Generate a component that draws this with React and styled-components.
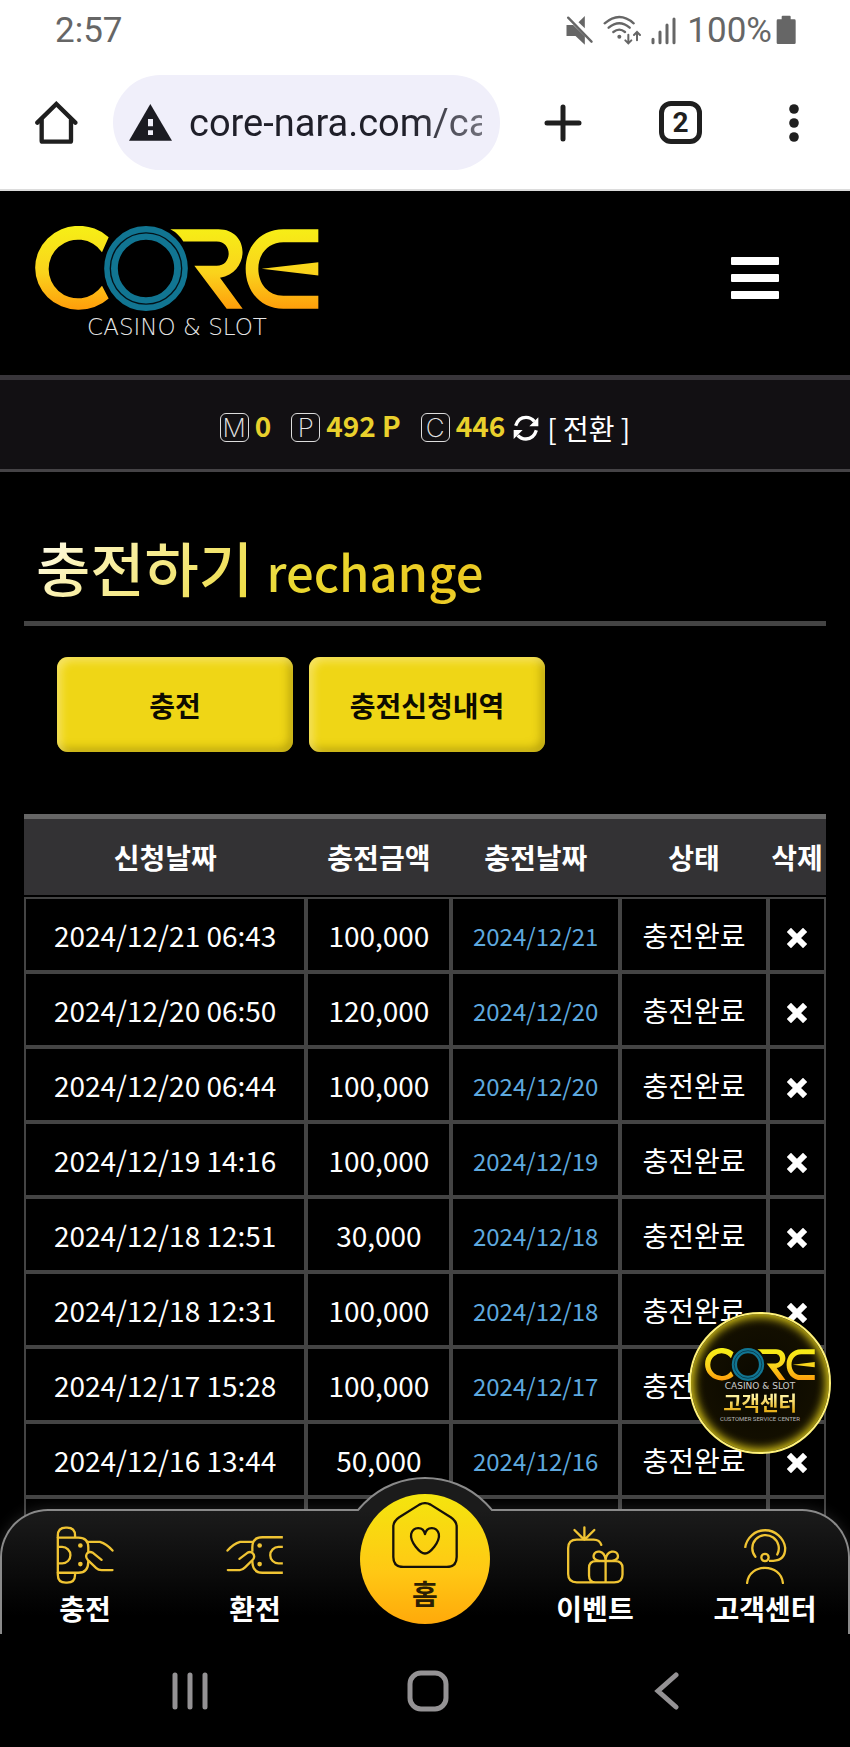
import React from "react";
import styled, { createGlobalStyle } from "styled-components";

const records = [
    { requested: "2024/12/21 06:43", amount: "100,000", charged: "2024/12/21" },
    { requested: "2024/12/20 06:50", amount: "120,000", charged: "2024/12/20" },
    { requested: "2024/12/20 06:44", amount: "100,000", charged: "2024/12/20" },
    { requested: "2024/12/19 14:16", amount: "100,000", charged: "2024/12/19" },
    { requested: "2024/12/18 12:51", amount: "30,000", charged: "2024/12/18" },
    { requested: "2024/12/18 12:31", amount: "100,000", charged: "2024/12/18" },
    { requested: "2024/12/17 15:28", amount: "100,000", charged: "2024/12/17" },
    { requested: "2024/12/16 13:44", amount: "50,000", charged: "2024/12/16" },
];

const MuteIcon = () => (
    <svg width="27" height="30" viewBox="76 42 80 90" aria-hidden="true">
        <path d="M77 72h20l35 34v25l-28-26H77z" fill="#666" />
        <path d="M113 64l19-19v37z" fill="#666" />
        <path d="M82 50l70 72" stroke="#666" strokeWidth="7" strokeLinecap="round" />
    </svg>
);

const WifiIcon = () => (
    <svg width="38" height="30" viewBox="186 42 114 90" fill="none" stroke="#666" strokeWidth="7" strokeLinecap="round" aria-hidden="true">
        <path d="M191 67q44-38 87 0M203 80q32-27 63 0M217 93q18-14 35 0" />
        <circle cx="235" cy="107" r="6" fill="#666" stroke="none" />
        <path d="M262 101v25M253 118l9 9 9-9M288 118V94M279 102l9-9 9 9" strokeWidth="6" />
    </svg>
);

const SignalIcon = () => (
    <svg width="26" height="30" viewBox="328 42 78 90" stroke="#666" strokeWidth="9" strokeLinecap="round" aria-hidden="true">
        <path d="M334 115v10M355 93v32M376 72v53M397 54v71" />
    </svg>
);

const BatteryIcon = () => (
    <svg width="20" height="30" viewBox="706 42 60 90" fill="#666" aria-hidden="true">
        <path d="M726 44h21q3 0 3 3v8h11q4 0 4 4v66q0 4-4 4h-49q-4 0-4-4V59q0-4 4-4h11v-8q0-3 3-3z" />
    </svg>
);

const HomeOutlineIcon = () => (
    <svg width="43" height="43" viewBox="106 123 129 129" fill="none" stroke="#1f1f1f" strokeWidth="13" strokeLinecap="round" aria-hidden="true">
        <path d="M113 188l57-56 57 56" strokeLinejoin="miter" />
        <path d="M126 180v62q0 3 3 3h82q3 0 3-3v-62" />
    </svg>
);

const WarningIcon = () => (
    <svg width="43" height="37" viewBox="388 126 129 111" aria-hidden="true">
        <path d="M452 126l65 110H388z" fill="#1b1b22" />
        <path d="M445 171h15v22h-15zM445 205h15v14h-15z" fill="#f0effa" />
    </svg>
);

const PlusIcon = () => (
    <svg width="38" height="38" viewBox="0 0 38 38" stroke="#1f1f1f" strokeWidth="5" strokeLinecap="round" aria-hidden="true">
        <path d="M19 3v32M3 19h32" />
    </svg>
);

const DotsIcon = () => (
    <svg width="10" height="38" viewBox="0 0 10 38" fill="#1f1f1f" aria-hidden="true">
        <circle cx="5" cy="5" r="4.8" />
        <circle cx="5" cy="19" r="4.8" />
        <circle cx="5" cy="33" r="4.8" />
    </svg>
);

const CoreMark = ({ id, width, height }) => (
    <svg width={width} height={height} viewBox="105 77 852 254" role="img" aria-label="CORE">
        <defs>
            <linearGradient id={id} gradientUnits="userSpaceOnUse" x1="0" y1="78" x2="0" y2="330">
                <stop offset="0" stopColor="#f6ef16" />
                <stop offset="0.55" stopColor="#fad31c" />
                <stop offset="1" stopColor="#ff9c0a" />
            </linearGradient>
        </defs>
        <g fill={`url(#${id})`}>
            <path d="M326 110A131 126 0 1 0 326 294L306 256A88 88 0 1 1 306 155Z" />
            <path d="M511 86H655C750 86 752 215 660 232L728 325H680L583 196H650C698 196 698 123 650 123H550Q535 98 511 86Z" />
            <path d="M955 86H850C780 86 737 140 737 205S780 325 850 325H955V286H850C805 286 775 250 775 205S805 125 850 125H955Z" />
            <path d="M785 205L955 185V225Z" />
        </g>
        <ellipse cx="438" cy="204" rx="105" ry="107" fill="none" stroke="#117592" strokeWidth="41" />
        <ellipse cx="438" cy="204" rx="107" ry="107" fill="none" stroke="#031219" strokeWidth="4" />
    </svg>
);

const RefreshIcon = () => (
    <svg width="26" height="26" viewBox="942 57 78 78" fill="none" stroke="#fff" strokeWidth="10" aria-hidden="true">
        <path d="M950 89Q958 64 981 64Q996 64 1006 76M1012 103Q1004 129 981 129Q966 129 956 118" />
        <path d="M1018 64v27h-27zM944 129v-27h27z" fill="#fff" stroke="none" />
    </svg>
);

const CrossIcon = () => (
    <svg width="20" height="20" viewBox="0 0 20 20" stroke="#fff" strokeWidth="6" aria-hidden="true">
        <path d="M4 4l12 12M16 4L4 16" strokeLinecap="square" />
    </svg>
);

const lineIcon = {
    width: 58,
    height: 58,
    fill: "none",
    stroke: "#f0c433",
    strokeWidth: 7,
    strokeLinecap: "round",
    strokeLinejoin: "round",
    "aria-hidden": true,
};

const DepositIcon = () => (
    <svg {...lineIcon} viewBox="168 195 174 175">
        <path d="M225 228v-4q0-24-24-24h-4q-24 0-24 24v118q0 24 24 24h4q24 0 24-24v-4" />
        <path d="M173 230h62q30 0 30 30v14M265 302q0 34-30 34h-62M176 258h10a25 25 0 0 1 0 50h-10" />
        <path d="M262 243h38q20 6 38 26M305 297l-26-21q-11-6-18 2-6 10 2 19l26 25q6 6 16 6h33" />
        <circle cx="241" cy="254" r="7" fill="#f0c433" stroke="none" />
        <circle cx="241" cy="310" r="7" fill="#f0c433" stroke="none" />
    </svg>
);

const WithdrawIcon = () => (
    <svg {...lineIcon} viewBox="678 195 174 175">
        <path d="M849 229h-62q-30 0-30 30v14M757 300q0 36 30 36h62M849 258h-13a25 25 0 0 0 0 50h13" strokeLinecap="butt" />
        <path d="M682 269q18-20 38-26h38M718 294l24-18q10-6 17 2 7 9 0 18l-24 24q-8 8-16 8h-36" />
        <circle cx="779" cy="254" r="7" fill="#f0c433" stroke="none" />
        <circle cx="779" cy="310" r="7" fill="#f0c433" stroke="none" />
    </svg>
);

const EventIcon = () => (
    <svg {...lineIcon} viewBox="438 195 174 175">
        <path d="M544 252q-5-16-23-16h-51q-26 0-26 26v78q0 25 26 25h113q25 0 25-24v-19q0-21-22-21h-58q-21 0-21 21v22q0 21 20 21M557 301v64" />
        <path d="M557 300C535 302 518 297 521 283C525 266 553 268 557 296C561 268 590 266 594 283C597 297 580 302 557 300" />
        <path d="M493 199v37M463 207l27 27M523 207l-27 27" />
    </svg>
);

const SupportIcon = () => (
    <svg {...lineIcon} viewBox="948 195 174 175">
        <path d="M975 261A61 61 0 0 1 1096 261Q1096 300 1060 300H1047" strokeLinecap="butt" />
        <path d="M1006 288A40 40 0 1 1 1072 281" />
        <circle cx="1035" cy="290" r="11" />
        <path d="M981 367C987 306 1083 306 1089 367" />
    </svg>
);

const HouseHeartIcon = () => (
    <svg {...lineIcon} width="66" height="66" stroke="#15110a" viewBox="-85 125 200 200">
        <path d="M-2 133Q15 124 32 133L93 171Q111 183 111 200V292Q111 322 81 322H-51Q-81 322-81 292V200Q-81 183-63 171Z" />
        <path d="M15 222C20 199 50 197 57 222C61 246 30 281 15 281C0 281-31 246-27 222C-20 197 10 199 15 222" />
    </svg>
);

const App = () => (
    <Screen>
        <GlobalStyle />
        <StatusBar>
            <span>2:57</span>
            <StatusIcons>
                <MuteIcon />
                <WifiIcon />
                <SignalIcon />
                <BatteryLevel>
                    100%
                    <BatteryIcon />
                </BatteryLevel>
            </StatusIcons>
        </StatusBar>
        <Toolbar>
            <IconButton aria-label="Home">
                <HomeOutlineIcon />
            </IconButton>
            <AddressBar>
                <WarningIcon />
                <AddressInput type="text" aria-label="Address" defaultValue="core-nara.com/ca" />
            </AddressBar>
            <ToolbarActions>
                <IconButton aria-label="New tab">
                    <PlusIcon />
                </IconButton>
                <TabCount>2</TabCount>
                <IconButton aria-label="More" $narrow>
                    <DotsIcon />
                </IconButton>
            </ToolbarActions>
        </Toolbar>

        <Site>
            <SiteHeader>
                <LogoLink href="#">
                    <CoreMark id="logoGold" width="284" height="85" />
                    <Tagline>CASINO &amp; SLOT</Tagline>
                </LogoLink>
                <MenuButton aria-label="Menu">
                    <MenuLine />
                    <MenuLine />
                    <MenuLine />
                </MenuButton>
            </SiteHeader>
            <Wallet>
                <Balance>
                    <BalanceType>M</BalanceType>0
                </Balance>
                <Balance>
                    <BalanceType>P</BalanceType>492 P
                </Balance>
                <Balance>
                    <BalanceType>C</BalanceType>446
                    <ConvertLink href="#">
                        <RefreshIcon />[ 전환 ]
                    </ConvertLink>
                </Balance>
            </Wallet>

            <Main>
                <TitleBar>
                    <Title>
                        충전하기 <TitleSub>rechange</TitleSub>
                    </Title>
                </TitleBar>
                <Buttons>
                    <GoldButton>충전</GoldButton>
                    <GoldButton>충전신청내역</GoldButton>
                </Buttons>
                <Table>
                    <colgroup>
                        <Col $share="35.2%" />
                        <Col $share="18.1%" />
                        <Col $share="21%" />
                        <Col $share="18.5%" />
                        <Col $share="7.2%" />
                    </colgroup>
                    <thead>
                        <tr>
                            <HeadCell>신청날짜</HeadCell>
                            <HeadCell>충전금액</HeadCell>
                            <HeadCell>충전날짜</HeadCell>
                            <HeadCell>상태</HeadCell>
                            <HeadCell>삭제</HeadCell>
                        </tr>
                    </thead>
                    <tbody>
                        {records.map((record) => (
                            <tr key={record.requested}>
                                <Cell>{record.requested}</Cell>
                                <Cell>{record.amount}</Cell>
                                <DateCell>{record.charged}</DateCell>
                                <Cell>충전완료</Cell>
                                <Cell>
                                    <DeleteButton aria-label="삭제">
                                        <CrossIcon />
                                    </DeleteButton>
                                </Cell>
                            </tr>
                        ))}
                        <tr>
                            <Cell />
                            <Cell />
                            <DateCell />
                            <Cell />
                            <Cell />
                        </tr>
                    </tbody>
                </Table>
            </Main>

            <SupportBadge href="#">
                <CoreMark id="badgeGold" width="110" height="33" />
                <BadgeTagline>CASINO &amp; SLOT</BadgeTagline>
                <BadgeName>고객센터</BadgeName>
                <BadgeNote>CUSTOMER SERVICE CENTER</BadgeNote>
            </SupportBadge>

            <TabBar>
                <Tab href="#">
                    <DepositIcon />
                    충전
                </Tab>
                <Tab href="#">
                    <WithdrawIcon />
                    환전
                </Tab>
                <HomeTab href="#">
                    <HouseHeartIcon />
                    홈
                </HomeTab>
                <Tab href="#">
                    <EventIcon />
                    이벤트
                </Tab>
                <Tab href="#">
                    <SupportIcon />
                    고객센터
                </Tab>
            </TabBar>
        </Site>

        <SystemBar>
            <SystemButton aria-label="Recents">
                <svg width="38" height="42" viewBox="0 0 38 42" aria-hidden="true">
                    <path d="M4 5v32M19 5v32M34 5v32" />
                </svg>
            </SystemButton>
            <SystemButton aria-label="Home">
                <svg width="42" height="42" viewBox="0 0 42 42" aria-hidden="true">
                    <rect x="3" y="3" width="36" height="36" rx="11" />
                </svg>
            </SystemButton>
            <SystemButton aria-label="Back">
                <svg width="32" height="42" viewBox="-6 0 32 42" aria-hidden="true">
                    <path d="M23 5L5 21l18 16" />
                </svg>
            </SystemButton>
        </SystemBar>
    </Screen>
);

// Styled Components
const GlobalStyle = createGlobalStyle`
    *,
    *::before {
        box-sizing: border-box;
    }

    body {
        margin: 0;
        background: #000;
        font-family: "Noto Sans CJK KR", "Noto Sans", sans-serif;
        font-size: 28px;
    }

    button {
        font: inherit;
        padding: 0;
        border: none;
        background: none;
        cursor: pointer;
    }

    a {
        color: inherit;
        text-decoration: none;
    }

    svg {
        display: block;
        flex-shrink: 0;
    }
`;

const Screen = styled.div`
    min-height: 100vh;
    display: flex;
    flex-direction: column;
`;

const StatusBar = styled.div`
    display: flex;
    justify-content: space-between;
    align-items: center;
    height: 60px;
    padding: 0 54px 0 55px;
    background: #fff;
    color: #666;
    font-family: Roboto, sans-serif;
    font-size: 35px;
`;

const StatusIcons = styled.div`
    display: flex;
    align-items: center;
    gap: 10px;
`;

const BatteryLevel = styled.span`
    display: flex;
    align-items: center;
    gap: 4px;
`;

const Toolbar = styled.div`
    display: flex;
    align-items: center;
    padding: 15px 40px 19px 35px;
    background: #fff;
    border-bottom: 2px solid #dcdcdc;
`;

const IconButton = styled.button`
    width: ${(props) => (props.$narrow ? "33px" : "43px")};
    height: 43px;
    display: flex;
    align-items: center;
    justify-content: center;
`;

const AddressBar = styled.label`
    flex: 1;
    min-width: 0;
    height: 95px;
    margin: 0 41px 0 35px;
    padding: 0 18px 0 16px;
    display: flex;
    align-items: center;
    gap: 17px;
    border-radius: 48px;
    background: #f0effa;
`;

const AddressInput = styled.input`
    flex: 1;
    min-width: 0;
    padding: 0;
    border: none;
    outline: none;
    background: none;
    color: #1f1f29;
    font-family: Roboto, sans-serif;
    font-size: 38px;
    mask-image: linear-gradient(to right, #000 75%, rgba(0, 0, 0, 0.6));
`;

const ToolbarActions = styled.div`
    display: flex;
    gap: 75px;
`;

const TabCount = styled.button`
    && {
        width: 43px;
        height: 43px;
        border: 5px solid #1f1f1f;
        border-radius: 12px;
        color: #1f1f1f;
        font-family: Roboto, sans-serif;
        font-size: 28px;
        font-weight: 700;
        line-height: 33px;
    }
`;

const Site = styled.div`
    position: relative;
    flex: 1;
    padding-bottom: 62px;
    background: #000;
    color: #fff;
`;

const SiteHeader = styled.header`
    display: flex;
    justify-content: space-between;
    align-items: flex-start;
    padding: 35px 71px 37px 35px;
`;

const LogoLink = styled.a`
    display: flex;
    flex-direction: column;
    align-items: center;
    gap: 5px;
`;

const Tagline = styled.span`
    color: #e6e6e6;
    font-family: "DejaVu Sans", sans-serif;
    font-size: 23px;
    font-weight: 200;
    line-height: 22px;
`;

const MenuButton = styled.button`
    display: flex;
    flex-direction: column;
    gap: 9px;
    margin-top: 31px;
`;

const MenuLine = styled.span`
    width: 48px;
    height: 8px;
    border-radius: 1px;
    background: #fff;
`;

const Wallet = styled.div`
    display: flex;
    justify-content: center;
    align-items: center;
    gap: 20px;
    height: 97px;
    border-top: 5px solid #38353a;
    border-bottom: 3px solid #454346;
    background: #121013;
`;

const Balance = styled.span`
    display: flex;
    align-items: center;
    gap: 6px;
    color: #e9d02c;
    font-weight: 700;
`;

const BalanceType = styled.span`
    width: 29px;
    height: 29px;
    margin-top: 6px;
    border: 1px solid #ddd;
    border-radius: 6px;
    color: #e6e6e6;
    font-family: Inter, sans-serif;
    font-size: 26px;
    font-weight: 200;
    line-height: 27px;
    text-align: center;
`;

const ConvertLink = styled.a`
    display: flex;
    align-items: center;
    gap: 8px;
    margin: 6px 0 0 2px;
    color: #fff;
    font-weight: 400;
`;

const Main = styled.main`
    padding: 0 24px;
`;

const TitleBar = styled.div`
    padding: 55px 12px 14px;
    border-bottom: 5px solid #444;
`;

const Title = styled.h1`
    width: fit-content;
    height: 80px;
    margin: 0;
    font-size: 59px;
    font-weight: 500;
    line-height: 80px;
    color: transparent;
    background: linear-gradient(135deg, #fff 0%, #fbf2b4 15%, #ead830 60%, #ecc820 90%, #e6dc4a 100%);
    background-clip: text;
`;

const TitleSub = styled.span`
    font-size: 49px;
    line-height: 60px;
`;

const Buttons = styled.div`
    display: flex;
    gap: 16px;
    padding: 31px 33px 62px;
`;

const GoldButton = styled.button`
    && {
        width: 236px;
        height: 95px;
        border-radius: 11px;
        background: #efd616;
        box-shadow: inset 4px 4px 8px rgba(255, 240, 150, 0.6), inset -4px -4px 8px rgba(140, 120, 0, 0.5);
        color: #0d0b00;
        font-weight: 700;
    }
`;

const Table = styled.table`
    width: 100%;
    table-layout: fixed;
    border-collapse: separate;
    border-spacing: 0;
    text-align: center;
`;

const Col = styled.col`
    width: ${(props) => props.$share};
`;

const HeadCell = styled.th`
    height: 83px;
    padding: 0;
    border-top: 5px solid #666;
    border-bottom: 2px solid #000;
    background: #333234;
    background-clip: padding-box;
    font-weight: 700;
    white-space: nowrap;
`;

const Cell = styled.td`
    height: 75px;
    padding: 0;
    border: 2px solid #444;
    white-space: nowrap;
`;

const DateCell = styled(Cell)`
    padding-top: 2px;
    color: #5ea8de;
    font-size: 24px;
`;

const DeleteButton = styled.button`
    display: block;
    margin: 6px auto 0;
`;

const SupportBadge = styled.a`
    position: absolute;
    right: 19px;
    bottom: 180px;
    width: 142px;
    height: 142px;
    padding-top: 34px;
    display: flex;
    flex-direction: column;
    align-items: center;
    border: 2px solid #fff27a;
    border-radius: 50%;
    background: radial-gradient(circle, #0a0800 0%, #130f00 60%, #2b2400 100%);
    box-shadow: inset 0 0 10px 3px #d9c516;
`;

const BadgeTagline = styled.span`
    color: #ccc;
    font-family: "DejaVu Sans", sans-serif;
    font-size: 9px;
    line-height: 10px;
`;

const BadgeName = styled.span`
    color: transparent;
    background: linear-gradient(#fff3a0 20%, #e8b21c 80%);
    background-clip: text;
    font-size: 20px;
    font-weight: 700;
    line-height: 24px;
`;

const BadgeNote = styled.span`
    color: #b8b8b8;
    font-family: Roboto, sans-serif;
    font-size: 6px;
    line-height: 7px;
`;

const TabBar = styled.nav`
    position: absolute;
    left: 0;
    right: 0;
    bottom: 0;
    display: grid;
    grid-template-columns: repeat(5, 20vw);
    justify-content: center;
    height: 125px;
    border: 2px solid #8a8a8a;
    border-bottom: none;
    border-radius: 48px 48px 0 0;
    background: linear-gradient(#1b1b1b, #000 85%);
    box-shadow: 0 0 14px rgba(255, 255, 255, 0.12);

    &::before {
        content: "";
        position: absolute;
        top: -34px;
        left: calc(50% - 87px);
        width: 174px;
        height: 174px;
        border: 2px solid #8a8a8a;
        border-radius: 50%;
        background: #1b1b1b;
        clip-path: inset(0 0 140px 0);
    }
`;

const Tab = styled.a`
    display: flex;
    flex-direction: column;
    align-items: center;
    gap: 4px;
    padding-top: 15px;
    font-weight: 700;
    line-height: 40px;
`;

const HomeTab = styled.a`
    position: relative;
    justify-self: center;
    display: flex;
    flex-direction: column;
    align-items: center;
    gap: 5px;
    width: 130px;
    height: 130px;
    margin-top: -17px;
    padding-top: 8px;
    border-radius: 50%;
    background: linear-gradient(#f4e50e, #ffc814 60%, #ffa90a);
    color: #2c1f04;
    font-weight: 700;
    line-height: 40px;
`;

const SystemBar = styled.div`
    position: relative;
    display: flex;
    justify-content: space-between;
    align-items: center;
    height: 113px;
    padding: 0 171px;
    background: #000;
`;

const SystemButton = styled.button`
    svg {
        fill: none;
        stroke: #949294;
        stroke-width: 5px;
        stroke-linecap: round;
    }
`;

export default App;
